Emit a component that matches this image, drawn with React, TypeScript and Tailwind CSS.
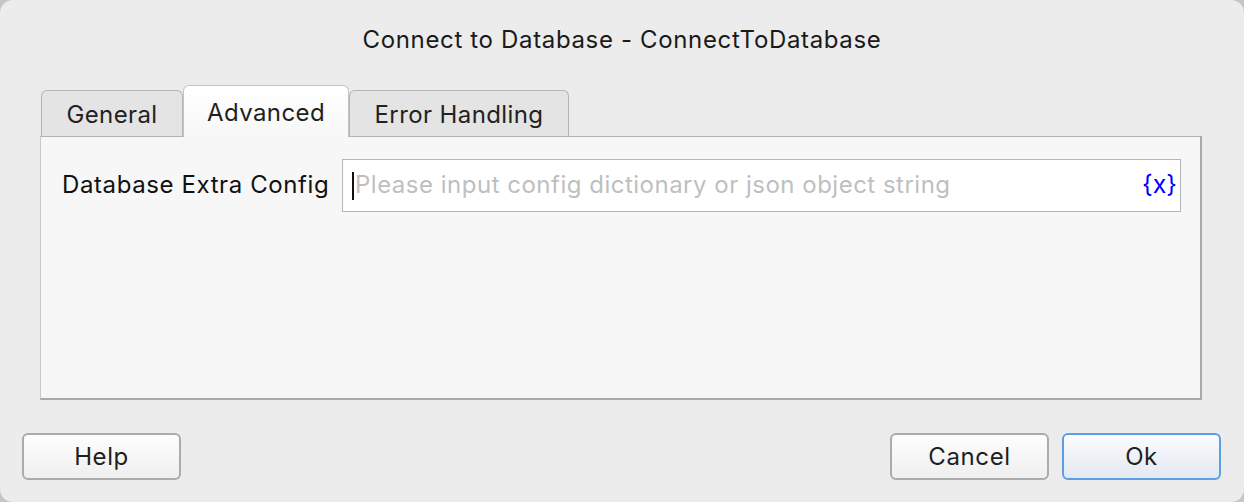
import { useState } from 'react';

const tabs = ['General', 'Advanced', 'Error Handling'];

const tabWidths: Record<string, string> = {
  General: 'w-[142px]',
  Advanced: 'w-[166px]',
  'Error Handling': 'w-[220px]',
};

function DialogButton({ label, primary }: { label: string; primary?: boolean }) {
  return (
    <button
      type="button"
      className={
        primary
          ? 'flex h-[47px] w-[159px] items-center justify-center rounded-[6px] border-2 border-[#5b9fe7] bg-gradient-to-b from-[#fbfcfe] to-[#e3e8f1] text-[24px] tracking-[0.6px] text-[#1f1f1f]'
          : 'flex h-[47px] w-[159px] items-center justify-center rounded-[6px] border-2 border-[#ababab] bg-gradient-to-b from-[#fdfdfd] to-[#efefef] text-[24px] tracking-[0.6px] text-[#1f1f1f]'
      }
    >
      {label}
    </button>
  );
}

export default function App() {
  const [active, setActive] = useState('Advanced');

  return (
    <div className="h-[502px] w-[1244px] bg-[#c6c6c6] font-['Inter',sans-serif]">
      <div className="flex h-full w-full flex-col rounded-[13px] bg-[#ececec]">
        {/* Title */}
        <h1 className="pt-[26px] text-center text-[24px] font-normal leading-[28px] tracking-[0.65px] text-[#1a1a1a]">
          Connect to Database - ConnectToDatabase
        </h1>

        {/* Tabs */}
        <div className="relative z-10 mt-[30px] flex h-[52px] items-end pl-[41px]">
          {tabs.map((tab) => {
            const selected = tab === active;
            return (
              <button
                key={tab}
                type="button"
                onClick={() => setActive(tab)}
                className={
                  selected
                    ? `${tabWidths[tab]} -mb-px flex h-[52px] items-center justify-center rounded-t-[6px] border border-b-0 border-[#c4c4c4] bg-gradient-to-b from-white to-[#f7f7f7] pt-[2px] text-[24px] tracking-[0.4px] text-[#1f1f1f]`
                    : `${tabWidths[tab]} flex h-[46px] items-center justify-center rounded-t-[6px] border border-b-0 border-[#b5b5b5] bg-[#e4e4e4] pt-[3px] text-[24px] tracking-[0.4px] text-[#222]`
                }
              >
                {tab}
              </button>
            );
          })}
        </div>

        {/* Panel */}
        <div className="ml-[40px] mr-[42px] h-[264px] border-t border-l border-r-2 border-b-2 border-t-[#b3b3b3] border-l-[#c8c8c8] border-r-[#a9a9a9] border-b-[#a9a9a9] bg-[#f7f7f7] pt-[22px] pl-[21px] pr-[19px]">
          <div className="flex items-center">
            <label className="w-[280px] shrink-0 pb-[2px] text-[24px] tracking-[0.6px] text-[#111]">Database Extra Config</label>
            <div className="flex h-[53px] flex-1 items-center border border-[#b6b6b6] bg-white pl-[9px] pr-[3px]">
              <span className="h-[28px] w-[2px] shrink-0 bg-[#111]" />
              <span className="ml-[1px] flex-1 pb-[2px] text-[24px] tracking-[0.5px] text-[#bfbfbf]">
                Please input config dictionary or json object string
              </span>
              <span className="pb-[2px] text-[25px] text-[#0000ff]">{'{x}'}</span>
            </div>
          </div>
        </div>

        {/* Buttons */}
        <div className="mt-[33px] flex items-center justify-between px-[22px] pr-[23px]">
          <DialogButton label="Help" />
          <div className="flex gap-[13px]">
            <DialogButton label="Cancel" />
            <DialogButton label="Ok" primary />
          </div>
        </div>
      </div>
    </div>
  );
}
